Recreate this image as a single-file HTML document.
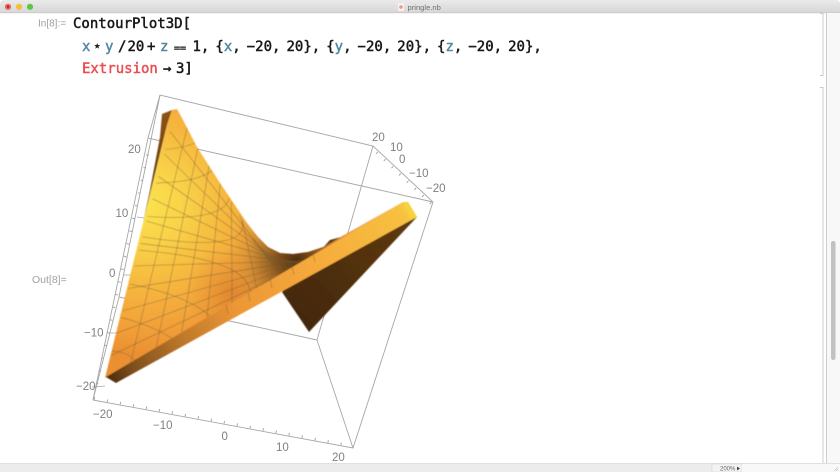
<!DOCTYPE html>
<html>
<head>
<meta charset="utf-8">
<style>
html,body{margin:0;padding:0;background:#fff;width:840px;height:472px;overflow:hidden}
svg{display:block;position:absolute;left:0;top:0}
.c{font-family:"DejaVu Sans Mono","Liberation Mono",monospace;font-size:14px;fill:#161616;stroke:#161616;stroke-width:.45px;word-spacing:-2.4px}
.b{fill:#5288a3;stroke:#5288a3}
.r{fill:#ea4f50;stroke:#ea4f50}
.l{font-family:"Liberation Sans",sans-serif;font-size:11.5px;fill:#808080}
.p{font-family:"Liberation Sans",sans-serif;fill:#a0a0a0}
</style>
</head>
<body>
<svg width="840" height="472" viewBox="0 0 840 472" xmlns="http://www.w3.org/2000/svg">
<defs>
<linearGradient id="tb" x1="0" y1="0" x2="0" y2="1"><stop offset="0" stop-color="#ebebeb"/><stop offset="1" stop-color="#d6d6d6"/></linearGradient>
<radialGradient id="base" gradientUnits="userSpaceOnUse" cx="146" cy="205" r="150">
<stop offset="0" stop-color="#fbe34e"/><stop offset=".28" stop-color="#f9d048"/><stop offset=".55" stop-color="#f6b63e"/><stop offset=".85" stop-color="#f19e38"/><stop offset="1" stop-color="#ea8f32"/></radialGradient>
<radialGradient id="dark" gradientUnits="userSpaceOnUse" cx="296" cy="260" r="70">
<stop offset="0" stop-color="#4f2d0e" stop-opacity="1"/><stop offset=".25" stop-color="#7a4a1a" stop-opacity=".95"/><stop offset=".48" stop-color="#a06a28" stop-opacity=".8"/><stop offset=".75" stop-color="#c98a35" stop-opacity=".4"/><stop offset="1" stop-color="#e08e32" stop-opacity="0"/></radialGradient>
<radialGradient id="warm" gradientUnits="userSpaceOnUse" cx="232" cy="292" r="48">
<stop offset="0" stop-color="#d87e2c" stop-opacity=".75"/><stop offset="1" stop-color="#e88e32" stop-opacity="0"/></radialGradient>
<linearGradient id="band" gradientUnits="userSpaceOnUse" x1="110" y1="382" x2="410" y2="208">
<stop offset="0" stop-color="#4f2c0e"/><stop offset=".08" stop-color="#80501c"/><stop offset=".25" stop-color="#c07a2a"/><stop offset=".42" stop-color="#ec9636"/><stop offset=".7" stop-color="#f6ac3c"/><stop offset=".97" stop-color="#f7c040"/><stop offset="1" stop-color="#f8d040"/></linearGradient>
<linearGradient id="flank" gradientUnits="userSpaceOnUse" x1="160" y1="115" x2="145" y2="222">
<stop offset="0" stop-color="#8a5218"/><stop offset="1" stop-color="#4f2e0e"/></linearGradient>
<linearGradient id="back" gradientUnits="userSpaceOnUse" x1="400" y1="225" x2="300" y2="320">
<stop offset="0" stop-color="#5c3812"/><stop offset="1" stop-color="#44280c"/></linearGradient>
<clipPath id="front"><path d="M105 378L143 223L167 125L172 110L177 109L183 120L197 147L220 183L247 223L258 237L268 247L280 253L293 254L308 252L323 247L403 202Z"/></clipPath>
<filter id="s" x="-5%" y="-5%" width="110%" height="110%"><feGaussianBlur stdDeviation=".4"/></filter>
<filter id="t" x="-5%" y="-20%" width="110%" height="140%"><feGaussianBlur stdDeviation=".3"/></filter>
</defs>

<!-- window chrome -->
<path d="M0 13V4Q0 0 4 0H836Q840 0 840 4V13Z" fill="url(#tb)"/>
<rect y="12.5" width="840" height=".7" fill="#c4c4c4"/>
<circle cx="8" cy="6.800" r="3.100" fill="#ec5f57"/><circle cx="8" cy="6.800" r="1" fill="#7a1f1a"/>
<circle cx="19" cy="6.800" r="3.100" fill="#f5bd3b"/>
<circle cx="30" cy="6.800" r="3.100" fill="#5cc545"/>
<rect x="398" y="3" width="6" height="8" fill="#f7f0ee"/><circle cx="401" cy="7" r="1.800" fill="#ee9a94"/>
<text class="p" x="407.500" y="10" font-size="7.600" style="fill:#707070" filter="url(#t)">pringle.nb</text>

<!-- right side -->
<rect x="826" y="13" width="14" height="451" fill="#f8f8f8"/>
<g fill="none" stroke="#c8c8c8" stroke-width=".9">
<path d="M820 13.500H823V75.500H820"/>
<path d="M820 87.500H823V464"/>
<path d="M826.500 13V464"/>
</g>
<rect x="831" y="241" width="4.500" height="119" rx="2.200" fill="#c1c1c1"/>

<!-- bottom bar -->
<rect y="463.500" width="840" height="8.500" fill="#ececec"/>
<rect y="463" width="840" height=".7" fill="#dcdcdc"/>
<rect x="712" y="464" width="30" height="8" fill="#f3f3f3" stroke="#d2d2d2" stroke-width=".5"/>
<rect x="742" y="464" width="98" height="8" fill="#f8f8f8"/>
<text x="720" y="470.600" font-family="Liberation Sans,sans-serif" font-size="6" fill="#666">200%</text>
<path d="M737 466.500L740 468.500L737 470.500Z" fill="#444"/>
<path d="M834 471L838 467M836 471L838 469" stroke="#c4c4c4" stroke-width=".6"/>

<!-- code -->
<g filter="url(#t)">
<text class="p" x="38" y="26.500" font-size="10">In[8]:=</text>
<text class="p" x="32" y="283" font-size="10.500">Out[8]=</text>
<text class="c" x="73" y="28">ContourPlot3D[</text>
<text class="c b" x="82" y="51">x</text>
<text class="c" x="93" y="51">⋆</text>
<text class="c b" x="105" y="51">y</text>
<text class="c" x="118" y="51">/</text>
<text class="c" x="127.500" y="51">20</text>
<text class="c" x="147" y="51">+</text>
<text class="c b" x="160" y="51">z</text>
<text class="c" x="174" y="51" style="font-size:10px">==</text>
<text class="c" x="192.500" y="51">1, {<tspan class="b">x</tspan>, −20, 20}, {<tspan class="b">y</tspan>, −20, 20}, {<tspan class="b">z</tspan>, −20, 20},</text>
<text class="c r" x="82" y="73">Extrusion</text>
<text class="c" x="163" y="73">→</text>
<text class="c" x="176" y="73">3]</text>
</g>

<!-- plot box (back) -->
<g fill="none" stroke="#a6a6a6" stroke-width=".9" filter="url(#t)">
<path d="M93 400L353 448L433 202L373 146L160 95L119 297"/>
<path d="M93 400L148 138L433 202"/>
<path d="M93 400L119 297"/>
<path d="M148 138L160 95"/>
<path d="M353 448L317 340L373 146"/>
<path d="M317 340L119 297"/>
<path d="M94 398.200L352 445.800" stroke-width="2.600" stroke-dasharray="1 12.200"/>
<path d="M431 203.500L375 151" stroke-width="2.600" stroke-dasharray="1 9.500"/>
<path d="M97 384L150 144" stroke-width="2.600" stroke-dasharray="1 12"/>
<path d="M105 386L92 387M118 333L110 333M131 275L124 275M144 218L137 217" stroke-width=".8"/>
</g>

<!-- surface -->
<g filter="url(#s)">
<path d="M417 217L309 332L282 292L330 240Z" fill="url(#back)"/>
<path d="M162 114L172 110L167 125L143 223L150 190L160 137Z" fill="url(#flank)"/>
<path d="M105 378L143 223L167 125L172 110L177 109L183 120L197 147L220 183L247 223L258 237L268 247L280 253L293 254L308 252L323 247L403 202Z" fill="url(#base)"/>
<g clip-path="url(#front)">
<rect x="100" y="100" width="330" height="290" fill="url(#warm)"/>
<rect x="100" y="100" width="330" height="290" fill="url(#dark)"/>
<g fill="none" stroke="#6e5a30" stroke-opacity=".6" stroke-width=".65">
<path d="M110.900 355.600L401.600 217.400M116.800 333.200L393.200 227.800M122.800 310.800L384.800 238.300M128.700 288.300L376.300 248.700M134.600 265.900L367.900 259.100M140.500 243.500L359.500 269.500M146.400 221.100L351.100 279.900M152.300 198.700L342.700 290.300M158.300 176.300L334.300 300.800M164.200 153.800L325.800 311.200M170.100 131.400L317.400 321.600"/>
<path d="M130.400 363.800L187.100 127.600M155.800 349.500L198.200 146.200M181.300 335.300L209.300 164.800M206.700 321L220.300 183.300M232.100 306.800L231.400 201.900M257.500 292.500L242.500 220.500M282.900 278.300L253.600 239.100M308.300 264L264.700 257.700M333.800 249.800L275.800 276.300"/>
<path d="M165.400 149.400Q183.700 148 196 142.500"/>
<path d="M156.500 183Q197.200 182.300 212.600 170.300"/>
<path d="M147.600 216.600Q223.600 221.600 229.200 198.200"/>
<path d="M142.300 236.800Q260.800 255.100 239.200 214.900"/>
<path d="M138.700 250.200Q255.700 259.700 249.900 296.800"/>
<path d="M129.900 283.900Q191.500 296.400 211.800 318.200"/>
<path d="M121 317.500Q154.700 326.300 173.600 339.500"/>
<path d="M112.100 351.100Q128 352 135.500 360.900"/>
</g>
</g>
<!-- extruded strip -->
<path d="M106 377L403 202L408 202L417 217L116 383Z" fill="url(#band)"/>
<path d="M403 202L408 202L417 217L412 219.500Z" fill="#f6d23e"/>
<path d="M313 254L315 262M292 266L294 275M270 279L272 288M248 292L250 301M226 305L228 314" stroke="#8a5a1e" stroke-width=".6" stroke-opacity=".7"/>
</g>

<!-- axis labels -->
<g filter="url(#t)">
<text class="l" x="128" y="153">20</text>
<text class="l" x="115.500" y="217">10</text>
<text class="l" x="109" y="277">0</text>
<text class="l" x="84" y="336.500">−10</text>
<text class="l" x="76" y="390">−20</text>
<text class="l" x="93" y="418">−20</text>
<text class="l" x="153" y="429">−10</text>
<text class="l" x="221.500" y="440">0</text>
<text class="l" x="276" y="451">10</text>
<text class="l" x="332" y="461">20</text>
<text class="l" x="372" y="141">20</text>
<text class="l" x="390" y="151">10</text>
<text class="l" x="399" y="163">0</text>
<text class="l" x="409" y="177">−10</text>
<text class="l" x="426" y="192">−20</text>
</g>
</svg>
</body>
</html>
